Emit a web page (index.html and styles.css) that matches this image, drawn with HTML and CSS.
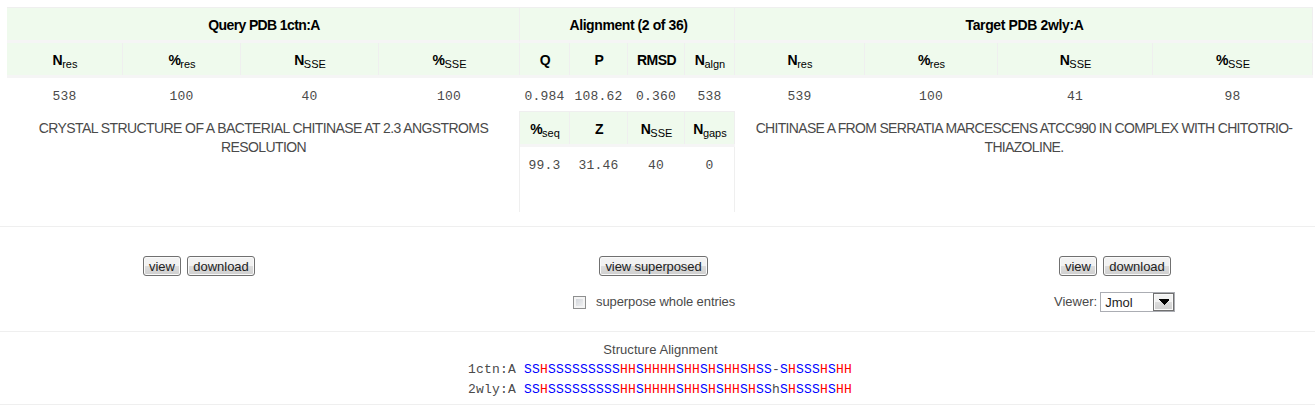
FILE: index.html
```html
<!DOCTYPE html>
<html lang="en">
<head>
<meta charset="utf-8">
<title>Structure Alignment</title>
<link rel="stylesheet" href="styles.css">
</head>
<body>
<main class="page">
  <section class="summary">
    <div class="panel query">
      <div class="title"><span>Query PDB 1ctn:A</span></div>
      <div class="row head"><div>N<sub>res</sub></div><div>%<sub>res</sub></div><div>N<sub>SSE</sub></div><div>%<sub>SSE</sub></div></div>
      <div class="row data"><div>538</div><div>100</div><div>40</div><div>100</div></div>
      <p class="desc">CRYSTAL STRUCTURE OF A BACTERIAL CHITINASE AT 2.3 ANGSTROMS<br>RESOLUTION</p>
    </div>
    <div class="panel align">
      <div class="title"><span>Alignment (2 of 36)</span></div>
      <div class="row head"><div>Q</div><div>P</div><div>RMSD</div><div>N<sub>algn</sub></div></div>
      <div class="row data"><div>0.984</div><div>108.62</div><div>0.360</div><div>538</div></div>
      <div class="row head second"><div>%<sub>seq</sub></div><div>Z</div><div>N<sub>SSE</sub></div><div>N<sub>gaps</sub></div></div>
      <div class="row data tall"><div>99.3</div><div>31.46</div><div>40</div><div>0</div></div>
    </div>
    <div class="panel target">
      <div class="title"><span>Target PDB 2wly:A</span></div>
      <div class="row head"><div>N<sub>res</sub></div><div>%<sub>res</sub></div><div>N<sub>SSE</sub></div><div>%<sub>SSE</sub></div></div>
      <div class="row data"><div>539</div><div>100</div><div>41</div><div>98</div></div>
      <p class="desc target-desc">CHITINASE A FROM SERRATIA MARCESCENS ATCC990 IN COMPLEX WITH CHITOTRIO-<br>THIAZOLINE.</p>
    </div>
  </section>
  <section class="actions">
    <div class="group left"><div class="buttons"><button class="btn view">view</button><button class="btn download">download</button></div></div>
    <div class="group middle">
      <div class="buttons"><button class="btn superposed">view superposed</button></div>
      <label class="option"><input type="checkbox" class="check"><span>superpose whole entries</span></label>
    </div>
    <div class="group right">
      <div class="buttons"><button class="btn view">view</button><button class="btn download">download</button></div>
      <div class="viewer"><span>Viewer:</span><div class="select"><span class="value">Jmol</span><span class="arrow"><svg width="10" height="6" viewBox="0 0 10 6" shape-rendering="crispEdges"><path d="M0 0h10v1L5 6 0 1z"/></svg></span></div></div>
    </div>
  </section>
  <section class="structure">
    <h2>Structure Alignment</h2>
    <pre>1ctn:A <b>SS</b><i>H</i><b>SSSSSSSSS</b><i>HH</i><b>S</b><i>HHHH</i><b>S</b><i>HH</i><b>S</b><i>H</i><b>S</b><i>HH</i><b>S</b><i>H</i><b>SS</b>-<b>S</b><i>H</i><b>SSS</b><i>H</i><b>S</b><i>HH</i>
2wly:A <b>SS</b><i>H</i><b>SSSSSSSSS</b><i>HH</i><b>S</b><i>HHHH</i><b>S</b><i>HH</i><b>S</b><i>H</i><b>S</b><i>HH</i><b>S</b><i>H</i><b>SS</b>h<b>S</b><i>H</i><b>SSS</b><i>H</i><b>S</b><i>HH</i></pre>
  </section>
</main>
</body>
</html>
```
FILE: styles.css
```css
* { box-sizing: border-box; }
body { margin: 0; background: #fff; color: #4a4a4a; font: 13px/19px "Liberation Sans", Arial, sans-serif; overflow: hidden; }
.page { width: 1315px; height: 416px; }
.summary { display: flex; height: 227px; padding: 7px 0 0 7px; border-bottom: 1px solid #efefef; }
.panel { flex: none; height: 205px; }
.query { width: 513px; --cols: 116px 118px 138px 141px; }
.align { width: 215px; --cols: 50px 58px 57px 50px; }
.target { width: 578px; --cols: 130px 133px 155px 160px; }
.title { height: 36px; padding: 8px 0 0 2px; text-align: center; color: #000; font-weight: bold; font-size: 14px; letter-spacing: -0.62px; background: #effaed; border-top: 1px solid #efefef; border-right: 1px solid #efefef; border-bottom: 3px solid #f5f5f5; }
.align .title { padding-left: 3px; letter-spacing: -0.42px; }
.target .title { letter-spacing: -0.37px; }
.row { display: grid; grid-template-columns: var(--cols); text-align: center; }
.head { height: 35px; color: #000; font-weight: bold; font-size: 14px; letter-spacing: -0.5px; background: #effaed; border-bottom: 3px solid #f5f5f5; }
.head > div { padding: 8px 0 0 1px; border-right: 1px solid #efefef; }
.head sub { font-weight: normal; font-size: 11px; letter-spacing: 0; line-height: 0; vertical-align: -3px; }
.data { height: 33px; padding-top: 9px; font: 13px/19px "Liberation Mono", "Courier New", monospace; letter-spacing: 0.2px; }
.data > div { padding-right: 1px; }
.second { height: 36px; border-top: 1px solid #efefef; box-shadow: -1px 0 #efefef; }
.tall { height: 65px; padding-top: 0; border-right: 1px solid #efefef; box-shadow: -1px 0 #efefef; }
.tall > div { padding-top: 9px; }
.desc { margin: 8px 0 0; text-align: center; font-size: 14px; letter-spacing: -0.59px; white-space: nowrap; }
.target-desc { letter-spacing: -0.68px; }
.actions { display: flex; height: 105px; padding-top: 29px; border-bottom: 1px solid #efefef; }
.left { width: 519px; padding-left: 143px; }
.middle { width: 216px; }
.middle .buttons { padding-left: 80px; }
.right { padding-left: 319px; }
.buttons { display: flex; gap: 6px; height: 20px; }
.right .buttons { padding-left: 5px; }
.btn { height: 20px; padding: 1px 0 0; font: 13px/17px "Liberation Sans", Arial, sans-serif; color: #222; border: 1px solid #707070; border-radius: 3px; background: linear-gradient(#f2f2f2 0 50%, #dcdcdc 50%, #cfcfcf); box-shadow: inset 0 0 0 1px #fafafa; }
.view { width: 38px; }
.download { width: 68px; }
.superposed { width: 109px; letter-spacing: -0.1px; }
.option { display: flex; align-items: center; margin: 16px 0 0 54px; height: 19px; letter-spacing: -0.08px; white-space: nowrap; }
.check { flex: none; appearance: none; width: 13px; height: 13px; margin: 1px 10px 0 0; border: 1px solid #8e8f8f; background: linear-gradient(135deg, #cbcfd5, #f6f6f6); box-shadow: inset 0 0 0 2px #f4f4f4; }
.viewer { display: flex; margin-top: 16px; gap: 3px; }
.select { display: flex; width: 75px; height: 20px; color: #222; border: 1px solid #abadb3; }
.value { width: 52px; padding-left: 4px; }
.arrow { display: flex; align-items: center; justify-content: center; width: 21px; height: 18px; border: 1px solid #707070; background: linear-gradient(#f2f2f2 0 50%, #dcdcdc 50%, #cfcfcf); box-shadow: inset 0 0 0 1px #fafafa; }
.structure { height: 73px; padding-top: 9px; border-bottom: 1px solid #efefef; text-align: center; }
.structure h2 { margin: 0 0 1px 6px; font-size: 13px; font-weight: normal; line-height: 18px; letter-spacing: 0.05px; }
.structure pre { margin: 0 0 0 468px; text-align: left; font: 13px/20px "Liberation Mono", "Courier New", monospace; letter-spacing: 0.198px; }
.structure b { color: #00f; font-weight: normal; }
.structure i { color: #f00; font-style: normal; }
```
